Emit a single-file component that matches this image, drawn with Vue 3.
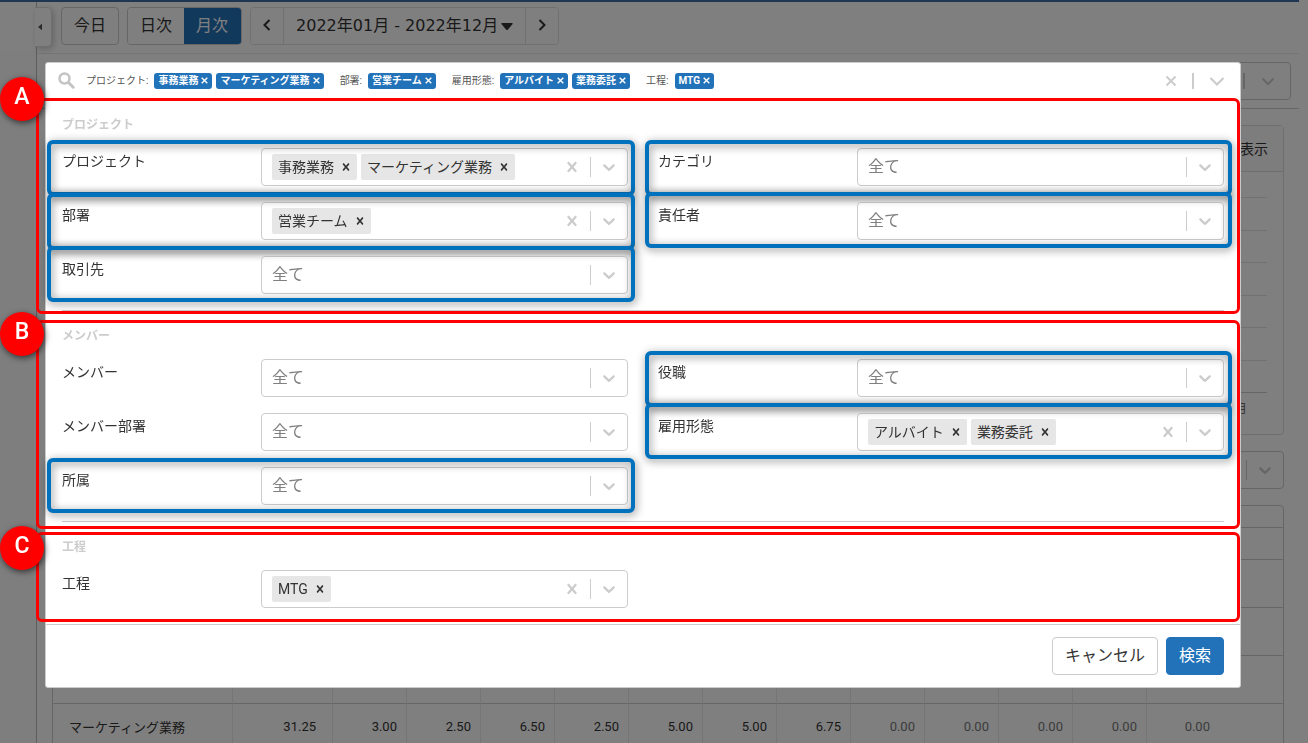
<script setup>
import { ref } from "vue";

const clearPath =
  "M14.348 14.849c-0.469 0.469-1.229 0.469-1.697 0l-2.651-3.030-2.651 3.029c-0.469 0.469-1.229 0.469-1.697 0-0.469-0.469-0.469-1.229 0-1.697l2.758-3.15-2.759-3.152c-0.469-0.469-0.469-1.228 0-1.697s1.228-0.469 1.697 0l2.652 3.031 2.651-3.031c0.469-0.469 1.228-0.469 1.697 0s0.469 1.229 0 1.697l-2.758 3.152 2.758 3.15c0.469 0.469 0.469 1.229 0 1.698z";
const downPath =
  "M4.516 7.548c0.436-0.446 1.043-0.481 1.576 0l3.908 3.747 3.908-3.747c0.533-0.481 1.141-0.446 1.574 0 0.436 0.445 0.408 1.197 0 1.615-0.406 0.418-4.695 4.502-4.695 4.502-0.217 0.223-0.502 0.335-0.787 0.335s-0.57-0.112-0.789-0.335c0 0-4.287-4.084-4.695-4.502s-0.436-1.17 0-1.615z";

const sections = ref([
  {
    key: "A",
    title: "プロジェクト",
    fields: [
      { id: "project", label: "プロジェクト", values: ["事務業務", "マーケティング業務"], mark: "top" },
      { id: "category", label: "カテゴリ", values: [], mark: "top" },
      { id: "department", label: "部署", values: ["営業チーム"], mark: "middle" },
      { id: "owner", label: "責任者", values: [], mark: "bottom" },
      { id: "client", label: "取引先", values: [], mark: "bottom" },
    ],
  },
  {
    key: "B",
    title: "メンバー",
    fields: [
      { id: "member", label: "メンバー", values: [] },
      { id: "position", label: "役職", values: [], mark: "top" },
      { id: "member-department", label: "メンバー部署", values: [] },
      { id: "employment", label: "雇用形態", values: ["アルバイト", "業務委託"], mark: "bottom" },
      { id: "belongs", label: "所属", values: [], mark: "single" },
    ],
  },
  {
    key: "C",
    title: "工程",
    fields: [{ id: "process", label: "工程", values: ["MTG"] }],
  },
]);

const summary = ref([
  { label: "プロジェクト:", values: ["事務業務", "マーケティング業務"] },
  { label: "部署:", values: ["営業チーム"] },
  { label: "雇用形態:", values: ["アルバイト", "業務委託"] },
  { label: "工程:", values: ["MTG"] },
]);

const hours = ["3.00", "2.50", "6.50", "2.50", "5.00", "5.00", "6.75", "0.00", "0.00", "0.00", "0.00", "0.00"];

const remove = (list, index) => list.splice(index, 1);
</script>

<template>
  <div class="app">
    <div class="app__topbar"></div>
    <div class="app__body">
      <aside class="sidebar">
        <div class="sidebar__head"></div>
        <button class="sidebar__toggle" type="button">
          <svg width="4" height="8" viewBox="0 0 5 8"><path d="M5 0v8L0 4z" fill="#555" /></svg>
        </button>
      </aside>
      <main class="main">
        <div class="toolbar">
          <button class="btn" type="button">今日</button>
          <div class="toggle">
            <button class="toggle__item" type="button">日次</button>
            <button class="toggle__item toggle__item--active" type="button">月次</button>
          </div>
          <div class="range">
            <button class="range__arrow" type="button">
              <svg width="8" height="12" viewBox="0 0 8 12"><path d="M6.500 1L1.500 6l5 5" fill="none" stroke="#333" stroke-width="2" /></svg>
            </button>
            <button class="range__label" type="button">
              2022年01月 - 2022年12月
              <svg width="12" height="7" viewBox="0 0 12 7"><path d="M1 0h10q1 0 .6 1L7 6.500q-1 1-2 0L.4 1Q0 0 1 0z" fill="#333" /></svg>
            </button>
            <button class="range__arrow" type="button">
              <svg width="8" height="12" viewBox="0 0 8 12"><path d="M1.500 1l5 5-5 5" fill="none" stroke="#333" stroke-width="2" /></svg>
            </button>
          </div>
        </div>
        <div class="filter">
          <div class="filter__box">
            <span class="filter__bar"></span>
            <svg width="14" height="9" viewBox="0 0 14 9"><path d="M1.500 1.500L7 7l5.500-5.500" fill="none" stroke="#ccc" stroke-width="2" /></svg>
          </div>
        </div>
        <div class="content">
          <div class="card">
            <div class="card__head">表示</div>
            <div class="chart">
              <i v-for="n in 7" :key="n" class="chart__line"></i>
            </div>
            <div class="chart__label">12月</div>
          </div>
          <div class="unit">
            <span class="unit__bar"></span>
            <svg width="20" height="20" viewBox="0 0 20 20"><path :d="downPath" fill="#ccc" /></svg>
          </div>
          <div class="sheet">
            <table class="table">
              <colgroup>
                <col class="table__name" />
                <col class="table__sum" />
                <col v-for="n in 11" :key="n" class="table__month" />
                <col />
              </colgroup>
              <tbody>
                <tr class="table__row table__row--title"><td colspan="14"></td></tr>
                <tr class="table__row table__row--head"><td v-for="n in 14" :key="n"></td></tr>
                <tr v-for="r in 3" :key="r" class="table__row"><td v-for="n in 14" :key="n"></td></tr>
                <tr class="table__row">
                  <td>マーケティング業務</td>
                  <td>31.25</td>
                  <td v-for="(h, i) in hours" :key="i" :class="{ zero: h === '0.00' }">{{ h }}</td>
                </tr>
              </tbody>
            </table>
          </div>
        </div>
      </main>
    </div>

    <div class="overlay">
      <form class="modal" @submit.prevent>
        <div class="summary">
          <svg class="summary__search" width="17" height="17" viewBox="0 0 17 17">
            <circle cx="6.500" cy="6.500" r="5" fill="none" stroke="#c4c4c4" stroke-width="2.500" />
            <path d="M10.500 10.500l4.700 4.700" stroke="#c4c4c4" stroke-width="3" stroke-linecap="round" />
          </svg>
          <div v-for="group in summary" :key="group.label" class="summary__group">
            <span class="summary__label">{{ group.label }}</span>
            <span v-for="(v, i) in group.values" :key="v" class="tag">
              {{ v }}
              <button class="tag__remove" type="button" :aria-label="v" @click="remove(group.values, i)">
                <svg width="7" height="7" viewBox="0 0 7 7"><path d="M.7.7l5.600 5.600M6.300.7L.7 6.300" stroke="#fff" stroke-width="1.400" /></svg>
              </button>
            </span>
          </div>
          <div class="summary__tools">
            <button class="plain" type="button">
              <svg width="12" height="12" viewBox="0 0 12 12"><path d="M1.500 1.500l9 9M10.500 1.500l-9 9" stroke="#ccc" stroke-width="2" /></svg>
            </button>
            <span class="summary__bar"></span>
            <button class="plain" type="button">
              <svg width="16" height="10" viewBox="0 0 16 10"><path d="M1.500 2L8 8.500 14.500 2" fill="none" stroke="#ccc" stroke-width="2.200" /></svg>
            </button>
          </div>
        </div>

        <section v-for="section in sections" :key="section.key" class="section">
          <h2 class="section__title">{{ section.title }}</h2>
          <div class="fields">
            <div v-for="field in section.fields" :key="field.id" class="field">
              <label class="field__label" :for="field.id">{{ field.label }}</label>
              <div class="picker">
                <span v-for="(v, i) in field.values" :key="v" class="chip">
                  {{ v }}
                  <button class="chip__remove" type="button" :aria-label="v" @click="remove(field.values, i)">
                    <svg width="14" height="14" viewBox="0 0 20 20"><path :d="clearPath" fill="#333" /></svg>
                  </button>
                </span>
                <select :id="field.id" class="picker__select">
                  <option value="">{{ field.values.length ? "" : "全て" }}</option>
                </select>
                <button v-if="field.values.length" class="picker__icon" type="button" @click="field.values = []">
                  <svg width="20" height="20" viewBox="0 0 20 20"><path :d="clearPath" fill="#ccc" /></svg>
                </button>
                <span class="picker__bar"></span>
                <span class="picker__icon">
                  <svg width="20" height="20" viewBox="0 0 20 20"><path :d="downPath" fill="#ccc" /></svg>
                </span>
              </div>
              <div v-if="field.mark" class="mark" :class="`mark--${field.mark}`"></div>
            </div>
          </div>
          <div class="frame" :class="`frame--${section.key}`">
            <span class="frame__badge">{{ section.key }}</span>
          </div>
        </section>

        <div class="footer">
          <button class="btn" type="button">キャンセル</button>
          <button class="btn btn--primary" type="submit">検索</button>
        </div>
      </form>
    </div>
  </div>
</template>

<style>
body {
  margin: 0;
}
</style>

<style scoped>
.app,
.app * {
  box-sizing: border-box;
}
.app {
  height: 100vh;
  overflow: hidden;
  display: flex;
  flex-direction: column;
  padding-right: 9px;
  background: #fff;
  color: #333;
  font-family: Roboto, "Noto Sans CJK JP", sans-serif;
  font-size: 14px;
}
svg {
  display: block;
  flex: none;
}
button {
  font: inherit;
  color: inherit;
  cursor: pointer;
}
.app__topbar {
  flex: none;
  height: 2px;
  background: #3f6ba8;
}
.app__body {
  flex: 1;
  display: flex;
  min-height: 0;
}

/* background page */
.sidebar {
  position: relative;
  flex: none;
  width: 37px;
  border-right: 1px solid #bbb;
  background: #fcfcfc;
}
.sidebar__head {
  height: 49px;
  background: #fff;
}
.sidebar__toggle {
  position: absolute;
  top: 5px;
  left: 35px;
  width: 17px;
  height: 40px;
  display: flex;
  align-items: center;
  padding: 0 0 0 3px;
  border: 1px solid #ddd;
  border-left: 0;
  border-radius: 0 5px 5px 0;
  background: #fff;
  box-shadow: 2px 2px 6px rgba(0, 0, 0, 0.2);
}
.main {
  flex: 1;
  min-width: 0;
}
.toolbar {
  display: flex;
  gap: 8px;
  padding: 5px 8px 8px 24px;
  border-bottom: 1px solid #eaeaea;
}
.btn {
  height: 38px;
  padding: 0 12px;
  border: 1px solid #ccc;
  border-radius: 4px;
  background: #fff;
  font-size: 16px;
  line-height: 34px;
}
.btn--primary {
  border-color: #2272b9;
  background: #2272b9;
  color: #fff;
}
.toggle,
.range {
  display: flex;
  height: 38px;
  border: 1px solid #ccc;
  border-radius: 4px;
  overflow: hidden;
}
.toggle__item {
  padding: 0 12px;
  border: 0;
  background: #fff;
  font-size: 16px;
  line-height: 34px;
}
.toggle__item--active {
  padding: 0 13px 0 12px;
  background: #2272b9;
  color: #fff;
}
.range {
  border-color: #e0e0e0;
}
.range__arrow {
  width: 32px;
  display: flex;
  align-items: center;
  justify-content: center;
  padding: 0 0 2px;
  border: 0;
  background: #fff;
}
.range__label {
  display: flex;
  align-items: center;
  gap: 3px;
  padding: 0 12px;
  border: solid #e0e0e0;
  border-width: 0 1px;
  background: #fff;
  font-family: "DejaVu Sans", "Noto Sans CJK JP", sans-serif;
  font-size: 16px;
  line-height: 34px;
}
.filter {
  padding: 8px;
  border-bottom: 1px solid #ccc;
}
.filter__box {
  display: flex;
  align-items: center;
  justify-content: flex-end;
  gap: 16px;
  height: 38px;
  padding-right: 15px;
  border: 1px solid #ccc;
  border-radius: 4px;
}
.filter__bar {
  width: 2px;
  height: 16px;
  background: #ccc;
}
.content {
  display: flex;
  flex-direction: column;
  gap: 16px;
  padding: 16px 15px 0;
}
.card {
  height: 310px;
  border: 1px solid #ddd;
  border-radius: 4px;
}
.card__head {
  height: 46px;
  padding-right: 15px;
  border-bottom: 1px solid #ddd;
  background: #fafafa;
  line-height: 46px;
  text-align: right;
}
.chart {
  display: flex;
  flex-direction: column;
  justify-content: space-between;
  height: 196px;
  margin: 25px 16px 0;
}
.chart__line {
  height: 1px;
  background: #e2e2e2;
}
.chart__line:last-child {
  background: #ccc;
}
.chart__label {
  padding: 7px 36px 0;
  color: #666;
  font-size: 12px;
  line-height: 18px;
  text-align: right;
}
.unit {
  display: flex;
  align-items: center;
  justify-content: flex-end;
  gap: 8px;
  height: 38px;
  padding-right: 8px;
  border: 1px solid #ccc;
  border-radius: 4px;
}
.unit__bar {
  width: 1px;
  height: 20px;
  background: #ccc;
}
.sheet {
  border: 1px solid #ccc;
  border-radius: 4px 4px 0 0;
  overflow: hidden;
}
.table {
  width: 100%;
  border-collapse: separate;
  border-spacing: 0;
  table-layout: fixed;
  font-size: 13px;
}
.table__name {
  width: 180px;
}
.table__sum {
  width: 100px;
}
.table__month {
  width: 74px;
}
.table__row {
  height: 48px;
}
.table__row--title {
  height: 22px;
}
.table__row--head {
  height: 32px;
}
.table td {
  padding: 0 9px 2px 0;
  border-right: 1px solid #eaeaea;
  border-bottom: 1px solid #ccc;
  text-align: right;
}
.table td:first-child {
  padding: 0 0 2px 16px;
  text-align: left;
}
.table td:nth-child(2) {
  padding-right: 16px;
}
.table td:last-child {
  padding-right: 73px;
  border-right: 0;
}
.table td.zero {
  color: #777;
}

/* search dialog */
.overlay {
  position: fixed;
  inset: 0;
  padding: 62px 67px 0 45px;
  background: rgba(0, 0, 0, 0.5);
}
.modal {
  border: 1px solid #ccc;
  border-radius: 3px;
  background: #fff;
}
.summary {
  display: flex;
  align-items: center;
  gap: 16px;
  height: 37px;
  padding: 0 15px 2px 12px;
  font-size: 10px;
  line-height: 16px;
}
.summary__search {
  margin-right: -5px;
}
.summary__group {
  display: flex;
  align-items: center;
  gap: 4px;
  white-space: nowrap;
}
.summary__label {
  margin-right: 2px;
  color: #555;
}
.tag {
  display: flex;
  align-items: center;
  gap: 3px;
  height: 16px;
  padding: 0 4px;
  border-radius: 3px;
  background: #2272b9;
  color: #fff;
  font-weight: 700;
}
.tag__remove,
.plain {
  padding: 0;
  border: 0;
  background: none;
}
.summary__tools {
  display: flex;
  align-items: center;
  gap: 15px;
  margin-left: auto;
}
.summary__bar {
  width: 2px;
  height: 16px;
  background: #ccc;
}
.section {
  position: relative;
  padding: 16px 16px 0;
}
.section__title {
  margin: 0 0 14px;
  color: #ccc;
  font-size: 12px;
  font-weight: 700;
  line-height: 18px;
}
.fields {
  display: grid;
  grid-template-columns: 1fr 1fr;
  gap: 16px 30px;
  padding-bottom: 16px;
  border-bottom: 1px solid #ccc;
}
.section:nth-last-child(2) .fields {
  border-bottom: 0;
}
.field {
  position: relative;
  display: flex;
}
.field__label {
  flex: none;
  width: 199px;
  line-height: 26px;
}
.picker {
  flex: 1;
  min-width: 0;
  display: flex;
  align-items: center;
  height: 38px;
  padding-left: 10px;
  border: 1px solid #ccc;
  border-radius: 4px;
  background: #fff;
}
.picker__select {
  flex: 1;
  min-width: 0;
  height: 36px;
  padding: 0 0 2px;
  border: 0;
  outline: 0;
  appearance: none;
  background: none;
  color: #808080;
  font-family: inherit;
  font-size: 16px;
}
.picker__icon {
  display: flex;
  padding: 8px;
  border: 0;
  background: none;
}
.picker__bar {
  width: 1px;
  height: 20px;
  background: #ccc;
}
.chip {
  display: flex;
  align-items: center;
  gap: 1px;
  height: 26px;
  margin-right: 4px;
  padding-left: 6px;
  border-radius: 2px;
  background: #e6e6e6;
  line-height: 24px;
  white-space: nowrap;
}
.chip__remove {
  display: flex;
  padding: 4px;
  border: 0;
  background: none;
}
.footer {
  display: flex;
  justify-content: flex-end;
  gap: 8px;
  padding: 12px 16px;
  border-top: 1px solid #ccc;
}

/* guide marks laid over the dialog */
.mark {
  position: absolute;
  left: -15px;
  right: -7px;
  border: 4px solid #0071bc;
  border-radius: 6px;
  filter: drop-shadow(1px 2px 4px rgba(0, 0, 0, 0.5));
  pointer-events: none;
}
.field:nth-child(even) .mark {
  left: -13px;
  right: -8px;
}
.mark--top {
  top: -8px;
  bottom: -10px;
}
.mark--middle {
  top: -9px;
  bottom: -10px;
}
.mark--bottom {
  top: -10px;
  bottom: -8px;
}
.mark--single {
  top: -9px;
  bottom: -8px;
}
.frame {
  position: absolute;
  left: -10px;
  right: 0;
  border: 3px solid #f00;
  border-radius: 6px;
  pointer-events: none;
}
.frame--A {
  top: -2px;
  bottom: -3px;
}
.frame--B {
  top: 9px;
  bottom: -7px;
}
.frame--C {
  top: 10px;
  bottom: 2px;
}
.frame__badge {
  position: absolute;
  top: -24px;
  left: -39px;
  width: 44px;
  height: 44px;
  border-radius: 50%;
  background: #f00;
  box-shadow: 1px 2px 6px rgba(0, 0, 0, 0.6);
  color: #fff;
  font-size: 23px;
  font-weight: 500;
  line-height: 40px;
  text-align: center;
}
.frame--B .frame__badge {
  top: -11px;
}
.frame--C .frame__badge {
  top: -9px;
}
</style>
